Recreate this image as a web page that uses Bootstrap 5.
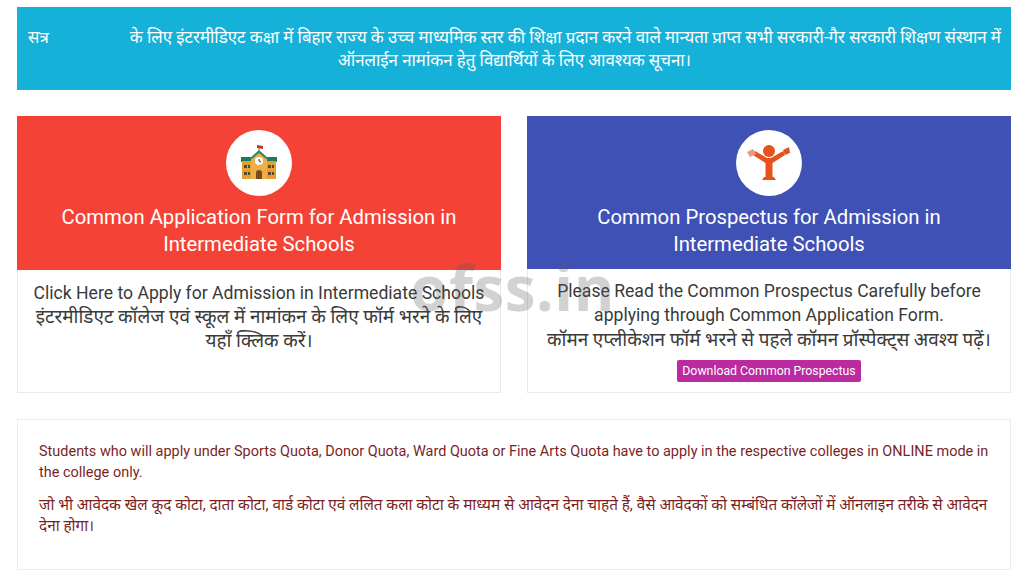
<!DOCTYPE html>
<html lang="hi">
<head>
<meta charset="utf-8">
<title>OFSS</title>
<link rel="stylesheet" href="https://cdn.jsdelivr.net/npm/bootstrap@5.3.0/dist/css/bootstrap.min.css">
<style>
html,body{height:576px;overflow:hidden;background:#fff}
body{font-family:Roboto,"Noto Sans",sans-serif;color:#333;position:relative}
.page-wrap{padding:7px 13px 0 17px}
.notice-bar{background:#16b1d9;color:#fff;height:83px;padding:19px 8px 0 9px;font-size:16.88px;line-height:23px;text-align:center;margin-bottom:26px}
.notice-gap{display:inline-block;width:81px}
.tile-row{display:grid;grid-template-columns:484px 484px;column-gap:26px;margin-bottom:26px}
.tile{border:1px solid #e9e9e9;border-top:0;height:277px;text-align:center}
.tile-head{color:#fff;display:flex;flex-direction:column;align-items:center;padding-top:14px}
.tile-red .tile-head{background:#f44336;height:154px;margin:0 -1px}
.tile-blue .tile-head{background:#3f51b5;height:153px;margin:0 -1px}
.round-icon{width:66px;height:66px;border-radius:50%;background:#fff;display:flex;align-items:center;justify-content:center;margin-bottom:8px}
.tile-title{font-size:20.3px;line-height:26.5px;font-weight:400;margin:0;padding:0 40px}
.tile-text{font-size:17.6px;line-height:24px;color:#3a3a3a;padding:11px 8px 0}
.tile-blue .tile-text{padding:10px 24px 0;line-height:24.3px}
.hi-big{font-size:18.9px;white-space:normal}
.tile-blue .hi-big{white-space:nowrap;margin:0 -20px}
.dl-btn{background:#bb2aa0;color:#fff;font-size:12.3px;line-height:16px;padding:3px 5px;border-radius:2px;border:0;margin-top:8px;display:inline-block;text-decoration:none}
.quota-box{border:1px solid #ececec;height:151px;padding:22px 21px 0;color:#7b1f1f;font-size:14.47px;line-height:20.5px}
.quota-box p{margin:0 0 12px}
.hi-quota{font-size:15.35px}
.wm{position:absolute;left:410px;top:252px;font-size:62px;line-height:70px;font-weight:700;color:rgba(90,90,90,.27);letter-spacing:.5px;font-family:"Open Sans",Roboto,sans-serif}
</style>
</head>
<body>
<div class="page-wrap">
  <div class="notice-bar">सत्र<span class="notice-gap"></span>के लिए इंटरमीडिएट कक्षा में बिहार राज्य के उच्च माध्यमिक स्तर की शिक्षा प्रदान करने वाले मान्यता प्राप्त सभी सरकारी-गैर सरकारी शिक्षण संस्थान में ऑनलाईन नामांकन हेतु विद्यार्थियों के लिए आवश्यक सूचना।</div>
  <div class="tile-row">
    <div class="tile tile-red">
      <div class="tile-head">
        <div class="round-icon">
          <svg width="36" height="36" viewBox="0 0 36 36"><path d="M18 1v6" stroke="#8a5a3a" stroke-width=".8"/><path d="M16 0l6 1v3l-6-1z" fill="#c0392b"/><path d="M0 12h36v5H0z" fill="#1f7a5c"/><path d="M1 16h34v18H1z" fill="#e2a033"/><path d="M10 34V13l8-7 8 7v21z" fill="#eeb046"/><path d="M8 14l10-9 10 9h-3l-7-6-7 6z" fill="#2d8a68"/><circle cx="18" cy="16" r="4" fill="#fff"/><path d="M18 14v2l2 1" stroke="#333" fill="none"/><path d="M15 34v-6a3 3 0 0 1 6 0v6z" fill="#7a4a22"/><path d="M3 20h3v3H3zM27 20h3v3h-3zM3 27h3v3H3zM27 27h3v3h-3zM31 20h2v3h-2zM31 27h2v3h-2zM7 27h2v3H7zM7 20h2v3H7z" fill="#5a4a2a"/></svg>
        </div>
        <h2 class="tile-title">Common Application Form for Admission in Intermediate Schools</h2>
      </div>
      <div class="tile-text">Click Here to Apply for Admission in Intermediate Schools<br><span class="hi-big">इंटरमीडिएट कॉलेज एवं स्कूल में नामांकन के लिए फॉर्म भरने के लिए यहाँ क्लिक करें।</span></div>
    </div>
    <div class="tile tile-blue">
      <div class="tile-head">
        <div class="round-icon">
          <svg width="46" height="38" viewBox="0 0 46 38"><circle cx="23" cy="7" r="6" fill="#e8501c"/><path d="M19.500 35V19L7 11l2-4 12 7h4l12-7 2 4-12.500 8v16z" fill="#e8501c"/><path d="M18 33h10l2 3H16z" fill="#e8501c"/><path d="M1 8l6-3 3 5-6 3z" fill="#f0967a"/><path d="M37 6l6-3 1 6-5 2z" fill="#e8501c"/></svg>
        </div>
        <h2 class="tile-title">Common Prospectus for Admission in Intermediate Schools</h2>
      </div>
      <div class="tile-text">Please Read the Common Prospectus Carefully before applying through Common Application Form.<br><span class="hi-big">कॉमन एप्लीकेशन फॉर्म भरने से पहले कॉमन प्रॉस्पेक्ट्स अवश्य पढ़ें।</span><br><a href="#" class="dl-btn">Download Common Prospectus</a></div>
    </div>
  </div>
  <div class="quota-box">
    <p>Students who will apply under Sports Quota, Donor Quota, Ward Quota or Fine Arts Quota have to apply in the respective colleges in ONLINE mode in the college only.</p>
    <p class="hi-quota">जो भी आवेदक खेल कूद कोटा, दाता कोटा, वार्ड कोटा एवं ललित कला कोटा के माध्यम से आवेदन देना चाहते हैं, वैसे आवेदकों को सम्बंधित कॉलेजों में ऑनलाइन तरीके से आवेदन देना होगा।</p>
  </div>
</div>
<div class="wm">ofss.in</div>
<script src="https://cdn.jsdelivr.net/npm/bootstrap@5.3.0/dist/js/bootstrap.bundle.min.js"></script>
</body>
</html>
